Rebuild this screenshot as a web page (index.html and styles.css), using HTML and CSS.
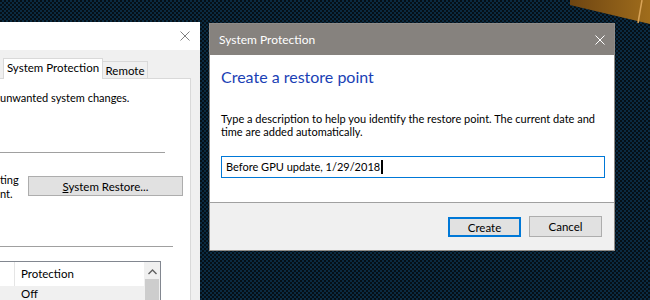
FILE: index.html
```html
<!DOCTYPE html>
<html lang="en">
<head>
<meta charset="UTF-8">
<meta name="viewport" content="width=device-width, initial-scale=1.0">
<title>Create a restore point</title>
<link rel="stylesheet" href="styles.css">
</head>
<body>
    <div class="desktop">
        <!-- wallpaper corner -->
        <svg class="wall-shape" width="80" height="26" viewBox="0 0 80 26">
            <defs>
                <linearGradient id="wood" x1="0" y1="0" x2="1" y2="0">
                    <stop offset="0" stop-color="#6e4512"/>
                    <stop offset="1" stop-color="#a06d1c"/>
                </linearGradient>
            </defs>
            <polygon points="0,0 80,0 80,24 0,5" fill="url(#wood)"/>
            <line x1="72" y1="0" x2="68" y2="23" stroke="#d9a458" stroke-width="1.5"/>
        </svg>

        <!-- System Properties window (behind) -->
        <div class="window props">
            <div class="props-bar">
                <svg class="close-x" width="10" height="10" viewBox="0 0 10 10">
                    <path d="M0.5 0.5 L9.5 9.5 M9.5 0.5 L0.5 9.5" stroke="#808080" stroke-width="1"/>
                </svg>
            </div>
            <div class="props-body">
                <div class="tabs">
                    <div class="tab active">System Protection</div>
                    <div class="tab">Remote</div>
                </div>
                <div class="panel">
                    <p class="intro">unwanted system changes.</p>
                    <div class="rule rule-short"></div>
                    <div class="restore-row">
                        <div class="restore-text">ting<br>nt.</div>
                        <button class="win-btn restore-btn"><u>S</u>ystem Restore...</button>
                    </div>
                    <div class="rule rule-long"></div>
                    <div class="drive-list">
                        <div class="list-head">
                            <div class="col-drive"></div>
                            <div class="col-prot">Protection</div>
                            <div class="scroll-top">
                                <svg width="9" height="6" viewBox="0 0 9 6">
                                    <path d="M0.5 5 L4.5 1 L8.5 5" fill="none" stroke="#606060" stroke-width="1.4"/>
                                </svg>
                            </div>
                        </div>
                        <div class="list-row">
                            <div class="col-drive"></div>
                            <div class="col-prot">Off</div>
                            <div class="scroll-thumb"></div>
                        </div>
                    </div>
                </div>
            </div>
        </div>

        <!-- Create restore point dialog -->
        <div class="window dialog">
            <div class="dialog-bar">
                <span class="dialog-title">System Protection</span>
                <svg class="close-x" width="10" height="10" viewBox="0 0 10 10">
                    <path d="M0.5 0.5 L9.5 9.5 M9.5 0.5 L0.5 9.5" stroke="#ffffff" stroke-width="1"/>
                </svg>
            </div>
            <div class="dialog-body">
                <h1 class="dialog-heading">Create a restore point</h1>
                <p class="dialog-text">Type a description to help you identify the restore point. The current date and time are added automatically.</p>
                <div class="text-box">Before GPU update, 1/29/2018<span class="caret"></span></div>
            </div>
            <div class="dialog-footer">
                <button class="win-btn default-btn">Create</button>
                <button class="win-btn">Cancel</button>
            </div>
        </div>
    </div>
</body>
</html>
```

FILE: styles.css
```css
body {
    margin: 0;
    font-family: Lato, "Noto Sans", sans-serif;
    font-size: 11px;
    color: #000;
}

.desktop {
    position: relative;
    width: 650px;
    height: 300px;
    overflow: hidden;
    background-color: #07141d;
    background-image: repeating-conic-gradient(#0b2b42 0 25%, #050f16 0 50%);
    background-size: 4px 4px;
}

.wall-shape {
    position: absolute;
    top: 0;
    right: 0;
}

.window {
    position: absolute;
    box-sizing: border-box;
}

.close-x {
    display: block;
}

/* ---------- system properties (back window) ---------- */

.props {
    left: 0;
    top: 22px;
    width: 200px;
    height: 290px;
    background: #f0f0f0;
    display: flex;
    flex-direction: column;
}

.props-bar {
    height: 30px;
    background: #fff;
    display: flex;
    align-items: center;
    justify-content: flex-end;
    padding-right: 10px;
}

.props-body {
    flex: 1;
    display: flex;
    flex-direction: column;
    padding: 8px 9px 0 0;
}

.tabs {
    display: flex;
    align-items: flex-end;
    height: 20px;
    padding-left: 3px;
}

.tab {
    box-sizing: border-box;
    height: 17px;
    width: 45px;
    border: 1px solid #d9d9d9;
    border-bottom: none;
    border-left: none;
    background: #f0f0f0;
    text-align: center;
    line-height: 17px;
    white-space: nowrap;
    font-size: 11.5px;
}

.tab.active {
    position: relative;
    height: 21px;
    width: 100px;
    margin-bottom: -1px;
    border-left: 1px solid #d9d9d9;
    background: #fff;
    line-height: 18px;
}

.panel {
    flex: 1;
    background: #fff;
    border: 1px solid #d9d9d9;
    border-left: none;
    padding-top: 11px;
    display: flex;
    flex-direction: column;
}

.intro {
    margin: 0;
    line-height: 15px;
}

.rule {
    height: 0;
    border-top: 1px solid #a0a0a0;
}

.rule-short {
    width: 165px;
    margin-top: 47px;
}

.rule-long {
    width: 173px;
    margin-top: 45px;
}

.restore-row {
    display: flex;
    margin-top: 20px;
}

.restore-text {
    width: 28px;
    line-height: 14px;
}

.win-btn {
    box-sizing: border-box;
    font-family: inherit;
    font-size: 11.5px;
    color: #000;
    background: #e1e1e1;
    border: 1px solid #adadad;
    padding: 0;
    height: 21px;
    width: 73px;
}

.win-btn u {
    text-decoration-thickness: 1px;
}

.restore-btn {
    width: 155px;
    height: 20px;
    margin-top: 3px;
}

.drive-list {
    width: 161px;
    margin-top: 14px;
    flex: 1;
    box-sizing: border-box;
    border: 1px solid #828790;
    border-left: none;
}

.list-head,
.list-row {
    display: flex;
}

.list-head {
    height: 24px;
}

.list-row {
    height: 24px;
}

.col-drive {
    width: 14px;
    border-right: 1px solid #e5e5e5;
}

.col-prot {
    flex: 1;
    padding-left: 6px;
    line-height: 24px;
    font-size: 11.5px;
}

.list-row .col-prot,
.list-row .col-drive {
    background: #f0f0f0;
    border-right: none;
}

.list-row .col-drive {
    width: 15px;
}

.list-row .col-prot {
    line-height: 14px;
    padding-top: 1px;
}

.scroll-top {
    width: 16px;
    background: #f0f0f0;
    display: flex;
    justify-content: center;
    padding-top: 7px;
    box-sizing: border-box;
    position: relative;
}

.scroll-top::after {
    content: "";
    position: absolute;
    left: 1px;
    right: 1px;
    bottom: 0;
    height: 7px;
    background: #cdcdcd;
}

.scroll-thumb {
    width: 16px;
    background: #f0f0f0;
    position: relative;
}

.scroll-thumb::after {
    content: "";
    position: absolute;
    left: 1px;
    right: 1px;
    top: 0;
    bottom: 0;
    background: #cdcdcd;
}

/* ---------- restore point dialog ---------- */

.dialog {
    left: 209px;
    top: 23px;
    width: 406px;
    height: 228px;
    background: #fff;
    border: 1px solid #8f8b87;
    display: flex;
    flex-direction: column;
}

.dialog-bar {
    height: 31px;
    background: #86827e;
    color: #fff;
    display: flex;
    align-items: center;
    justify-content: space-between;
    padding: 0 9px 0 9px;
}

.dialog-title {
    font-size: 12px;
}

.dialog-body {
    flex: 1;
    padding: 0 9px 0 11px;
}

.dialog-heading {
    margin: 12px 0 0;
    font-size: 16px;
    font-weight: normal;
    line-height: 20px;
    color: #1a3fb5;
}

.dialog-text {
    margin: 25px 0 0;
    line-height: 13px;
}

.text-box {
    margin-top: 18px;
    height: 22px;
    box-sizing: border-box;
    border: 1px solid #0078d7;
    padding-left: 4px;
    line-height: 20px;
    white-space: nowrap;
}

.caret {
    display: inline-block;
    width: 2px;
    height: 14px;
    background: #000;
    vertical-align: -3px;
    margin-left: 1px;
}

.dialog-footer {
    height: 48px;
    box-sizing: border-box;
    border-top: 1px solid #a0a0a0;
    background: #f0f0f0;
    display: flex;
    justify-content: flex-end;
    align-items: flex-start;
    gap: 8px;
    padding: 13px 12px 0 0;
}

.default-btn {
    border: 2px solid #0078d7;
    height: 20px;
    margin-top: 1px;
}
```
